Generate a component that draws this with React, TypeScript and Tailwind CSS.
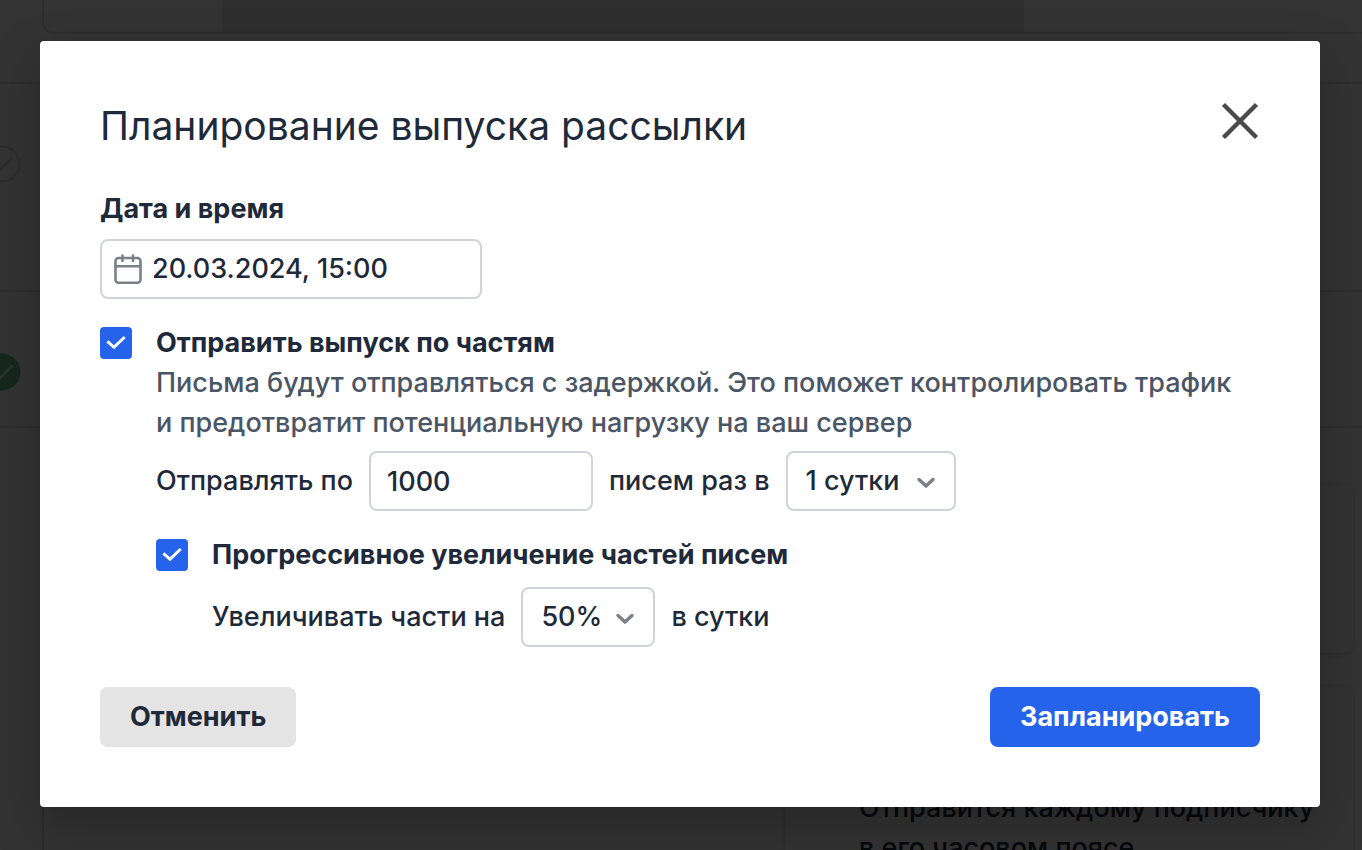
import type { ReactNode, SelectHTMLAttributes } from "react";

function CalendarIcon() {
  return (
    <svg
      className="h-8 w-8 shrink-0 text-[#7b8188]"
      viewBox="0 0 32 32"
      fill="none"
      stroke="currentColor"
      strokeWidth="2.6"
      strokeLinecap="round"
      aria-hidden="true"
    >
      <rect x="3.5" y="5" width="25" height="24.7" rx="3" />
      <path d="M3.5 13.3h25M10.500 2.500v5.500M21 2.500v5.500" />
    </svg>
  );
}

function CheckboxRow({ id, children }: { id: string; children: ReactNode }) {
  return (
    <div className="flex items-center gap-6">
      <span className="relative flex h-8 w-8 shrink-0">
        <input
          id={id}
          type="checkbox"
          defaultChecked
          className="peer h-8 w-8 appearance-none rounded border-2 border-[#d0d3db] bg-white checked:border-[#2563eb] checked:bg-[#2563eb]"
        />
        <svg
          className="pointer-events-none absolute inset-0 hidden h-8 w-8 peer-checked:block"
          viewBox="0 0 32 32"
          fill="none"
          stroke="white"
          strokeWidth="3"
          aria-hidden="true"
        >
          <path d="M7.400 14.300 14 20.300 24.700 10" />
        </svg>
      </span>
      <label htmlFor={id} className="font-bold">
        {children}
      </label>
    </div>
  );
}

function SelectBox({ className, ...rest }: SelectHTMLAttributes<HTMLSelectElement>) {
  return (
    <span className="relative flex">
      <select
        {...rest}
        className={
          "h-15 appearance-none rounded-lg border-2 border-[#d0d3db] bg-white pl-[18px] pr-12 " + className
        }
      />
      <svg
        className="pointer-events-none absolute right-5 top-[22px] h-5 w-5 text-[#7b8188]"
        viewBox="0 0 20 20"
        fill="none"
        stroke="currentColor"
        strokeWidth="3.5"
        strokeLinecap="round"
        strokeLinejoin="round"
        aria-hidden="true"
      >
        <path d="M3 6.500 10 13 17 6.500" />
      </svg>
    </span>
  );
}

function StatusDot({ done }: { done?: boolean }) {
  return (
    <svg className="-ml-4 h-[38px] w-[38px]" viewBox="0 0 38 38" fill="none" aria-hidden="true">
      <circle
        cx="18"
        cy="19"
        r={done ? 18.5 : 17.5}
        fill={done ? "#6ec38c" : "none"}
        stroke={done ? "none" : "#d9d9d9"}
        strokeWidth="2"
      />
      <path d="M8 19.500 15 26 28.500 12.500" stroke={done ? "#f2f2f2" : "#d9d9d9"} strokeWidth="2.500" />
    </svg>
  );
}

function PageBehind() {
  return (
    <div className="absolute inset-0 flex flex-col overflow-hidden bg-white" aria-hidden="true">
      <div className="h-[84px] shrink-0 border-b-2 border-[#e0e0e0] pl-[42px]">
        <div className="flex h-[34px] rounded-bl-xl border-b-2 border-l-2 border-[#e0e0e0]">
          <div className="w-[178px]" />
          <div className="w-[802px] bg-[#e6e7e7]" />
        </div>
      </div>
      <div className="flex h-[208px] shrink-0 border-b-2 border-[#e0e0e0] pt-[61px]">
        <StatusDot />
      </div>
      <div className="flex h-[136px] shrink-0 border-b-2 border-[#e0e0e0] pt-[61px]">
        <StatusDot done />
      </div>
      <div className="flex grow pl-[42px]">
        <div className="grow border-l-2 border-[#e0e0e0]" />
        <div className="flex w-[578px] flex-col gap-8 pr-2 pt-[55px]">
          <div className="h-[170px] rounded-lg border border-[#f0f0f0] shadow-md" />
          <div className="grow rounded-t-lg border border-b-0 border-[#f0f0f0] pl-[74px] pt-[102px] shadow-md">
            <p>
              Отправится каждому подписчику
              <br />в его часовом поясе
            </p>
          </div>
        </div>
      </div>
    </div>
  );
}

export default function App() {
  return (
    <div className="relative h-screen overflow-hidden font-['Inter',sans-serif] text-[27px] font-medium leading-10 text-gray-800">
      <PageBehind />
      <div className="relative h-full overflow-auto bg-black/80 px-10 pt-[41px]">
        <form
          role="dialog"
          aria-labelledby="dialog-title"
          onSubmit={(e) => e.preventDefault()}
          className="max-w-[1280px] rounded bg-white p-15 shadow-[0_20px_50px_rgba(0,0,0,0.25)]"
        >
          <div className="flex items-start justify-between">
            <h2 id="dialog-title" className="text-[39px] font-normal leading-[50px]">
              Планирование выпуска рассылки
            </h2>
            <button type="button" aria-label="Закрыть" className="flex h-10 w-10 items-center justify-center">
              <svg
                className="h-10 w-10 text-[#4a4a4a]"
                viewBox="0 0 40 40"
                stroke="currentColor"
                strokeWidth="4.5"
                aria-hidden="true"
              >
                <path d="M3.500 3.500 36.500 36.500M36.500 3.500 3.500 36.500" />
              </svg>
            </button>
          </div>

          <label htmlFor="send-date" className="mt-[38px] block font-bold">
            Дата и время
          </label>
          <div className="mt-[10px] flex h-15 w-[382px] items-center gap-2 rounded-lg border-2 border-[#d0d3db] pl-[10px]">
            <CalendarIcon />
            <input id="send-date" defaultValue="20.03.2024, 15:00" className="w-full min-w-0 grow outline-none" />
          </div>

          <div className="mt-6">
            <CheckboxRow id="split">Отправить выпуск по частям</CheckboxRow>
          </div>
          <div className="pl-14">
            <p className="text-gray-600">
              Письма будут отправляться с задержкой. Это поможет контролировать трафик и&nbsp;предотвратит
              потенциальную нагрузку на ваш сервер
            </p>
            <div className="mt-2 flex items-center gap-4">
              <label htmlFor="amount">Отправлять по</label>
              <input
                id="amount"
                defaultValue="1000"
                className="h-15 w-56 rounded-lg border-2 border-[#d0d3db] px-4 outline-none"
              />
              <label htmlFor="period">писем раз в</label>
              <SelectBox id="period" className="w-[170px]">
                <option>1 сутки</option>
              </SelectBox>
            </div>
            <div className="mt-6">
              <CheckboxRow id="progressive">Прогрессивное увеличение частей писем</CheckboxRow>
            </div>
            <div className="mt-3 flex items-center gap-4 pl-14">
              <label htmlFor="growth">Увеличивать части на</label>
              <SelectBox id="growth" className="w-[134px]">
                <option>50%</option>
              </SelectBox>
              <span>в сутки</span>
            </div>
          </div>

          <div className="mt-10 flex justify-between font-bold">
            <button type="button" className="h-15 rounded-lg bg-[#e4e4e4] px-[30px]">
              Отменить
            </button>
            <button type="submit" className="h-15 rounded-lg bg-[#2563eb] px-[30px] text-white">
              Запланировать
            </button>
          </div>
        </form>
      </div>
    </div>
  );
}
